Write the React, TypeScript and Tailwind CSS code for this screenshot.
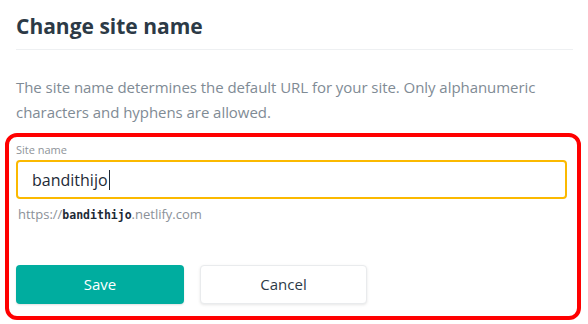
export default function App() {
  return (
    <div
      className="h-[324px] w-[588px] overflow-hidden bg-white pl-[5px] pr-[7px] pt-[12px]"
      style={{ fontFamily: '"Open Sans", "Noto Sans", sans-serif' }}
    >
      <div className="pl-[11px] pr-[8px]">
        <h2 className="border-b border-[#eef0f2] pb-[9px] text-[21px] font-bold leading-[28px] text-[#2c3a46]">
          Change site name
        </h2>
        <p className="mt-[25px] pr-[4px] text-[15px] leading-[25px] tracking-[-0.05px] text-[#7f8b95]">
          The site name determines the default URL for your site. Only alphanumeric characters and hyphens are allowed.
        </p>
      </div>

      <div className="mt-[8px] h-[187px] rounded-[12px] border-4 border-[#ff0000] pl-[7px] pr-[10px] pt-[5px]">
        <label className="block text-[11px] leading-[15px] text-[#8e9399]">Site name</label>
        <div className="mt-[3px] flex h-[39px] items-center rounded-[4px] border-2 border-[#fbb900] pl-[14px]">
          <span className="text-[16px] text-[#1d2a36]">bandithijo</span>
          <span className="ml-px h-[20px] w-px bg-[#1d2a36]" />
        </div>
        <div className="mt-[6px] pl-[2px] text-[13px] leading-[18px] text-[#8b9198]">
          https://
          <span className="font-bold text-[#1d2a36]" style={{ fontFamily: '"DejaVu Sans Mono", monospace', fontSize: 11.5 }}>
            bandithijo
          </span>
          .netlify.com
        </div>
        <div className="mt-[41px] flex gap-[16px]">
          <button className="h-[39px] w-[168px] rounded-[4px] bg-[#00ad9f] text-[15px] text-white shadow-[0_1px_2px_rgba(0,0,0,0.12)]">
            Save
          </button>
          <button className="h-[39px] w-[167px] rounded-[4px] border border-[#e9ebed] bg-white text-[15px] text-[#2c3a46] shadow-[0_1px_3px_rgba(0,0,0,0.1)]">
            Cancel
          </button>
        </div>
      </div>
    </div>
  );
}
